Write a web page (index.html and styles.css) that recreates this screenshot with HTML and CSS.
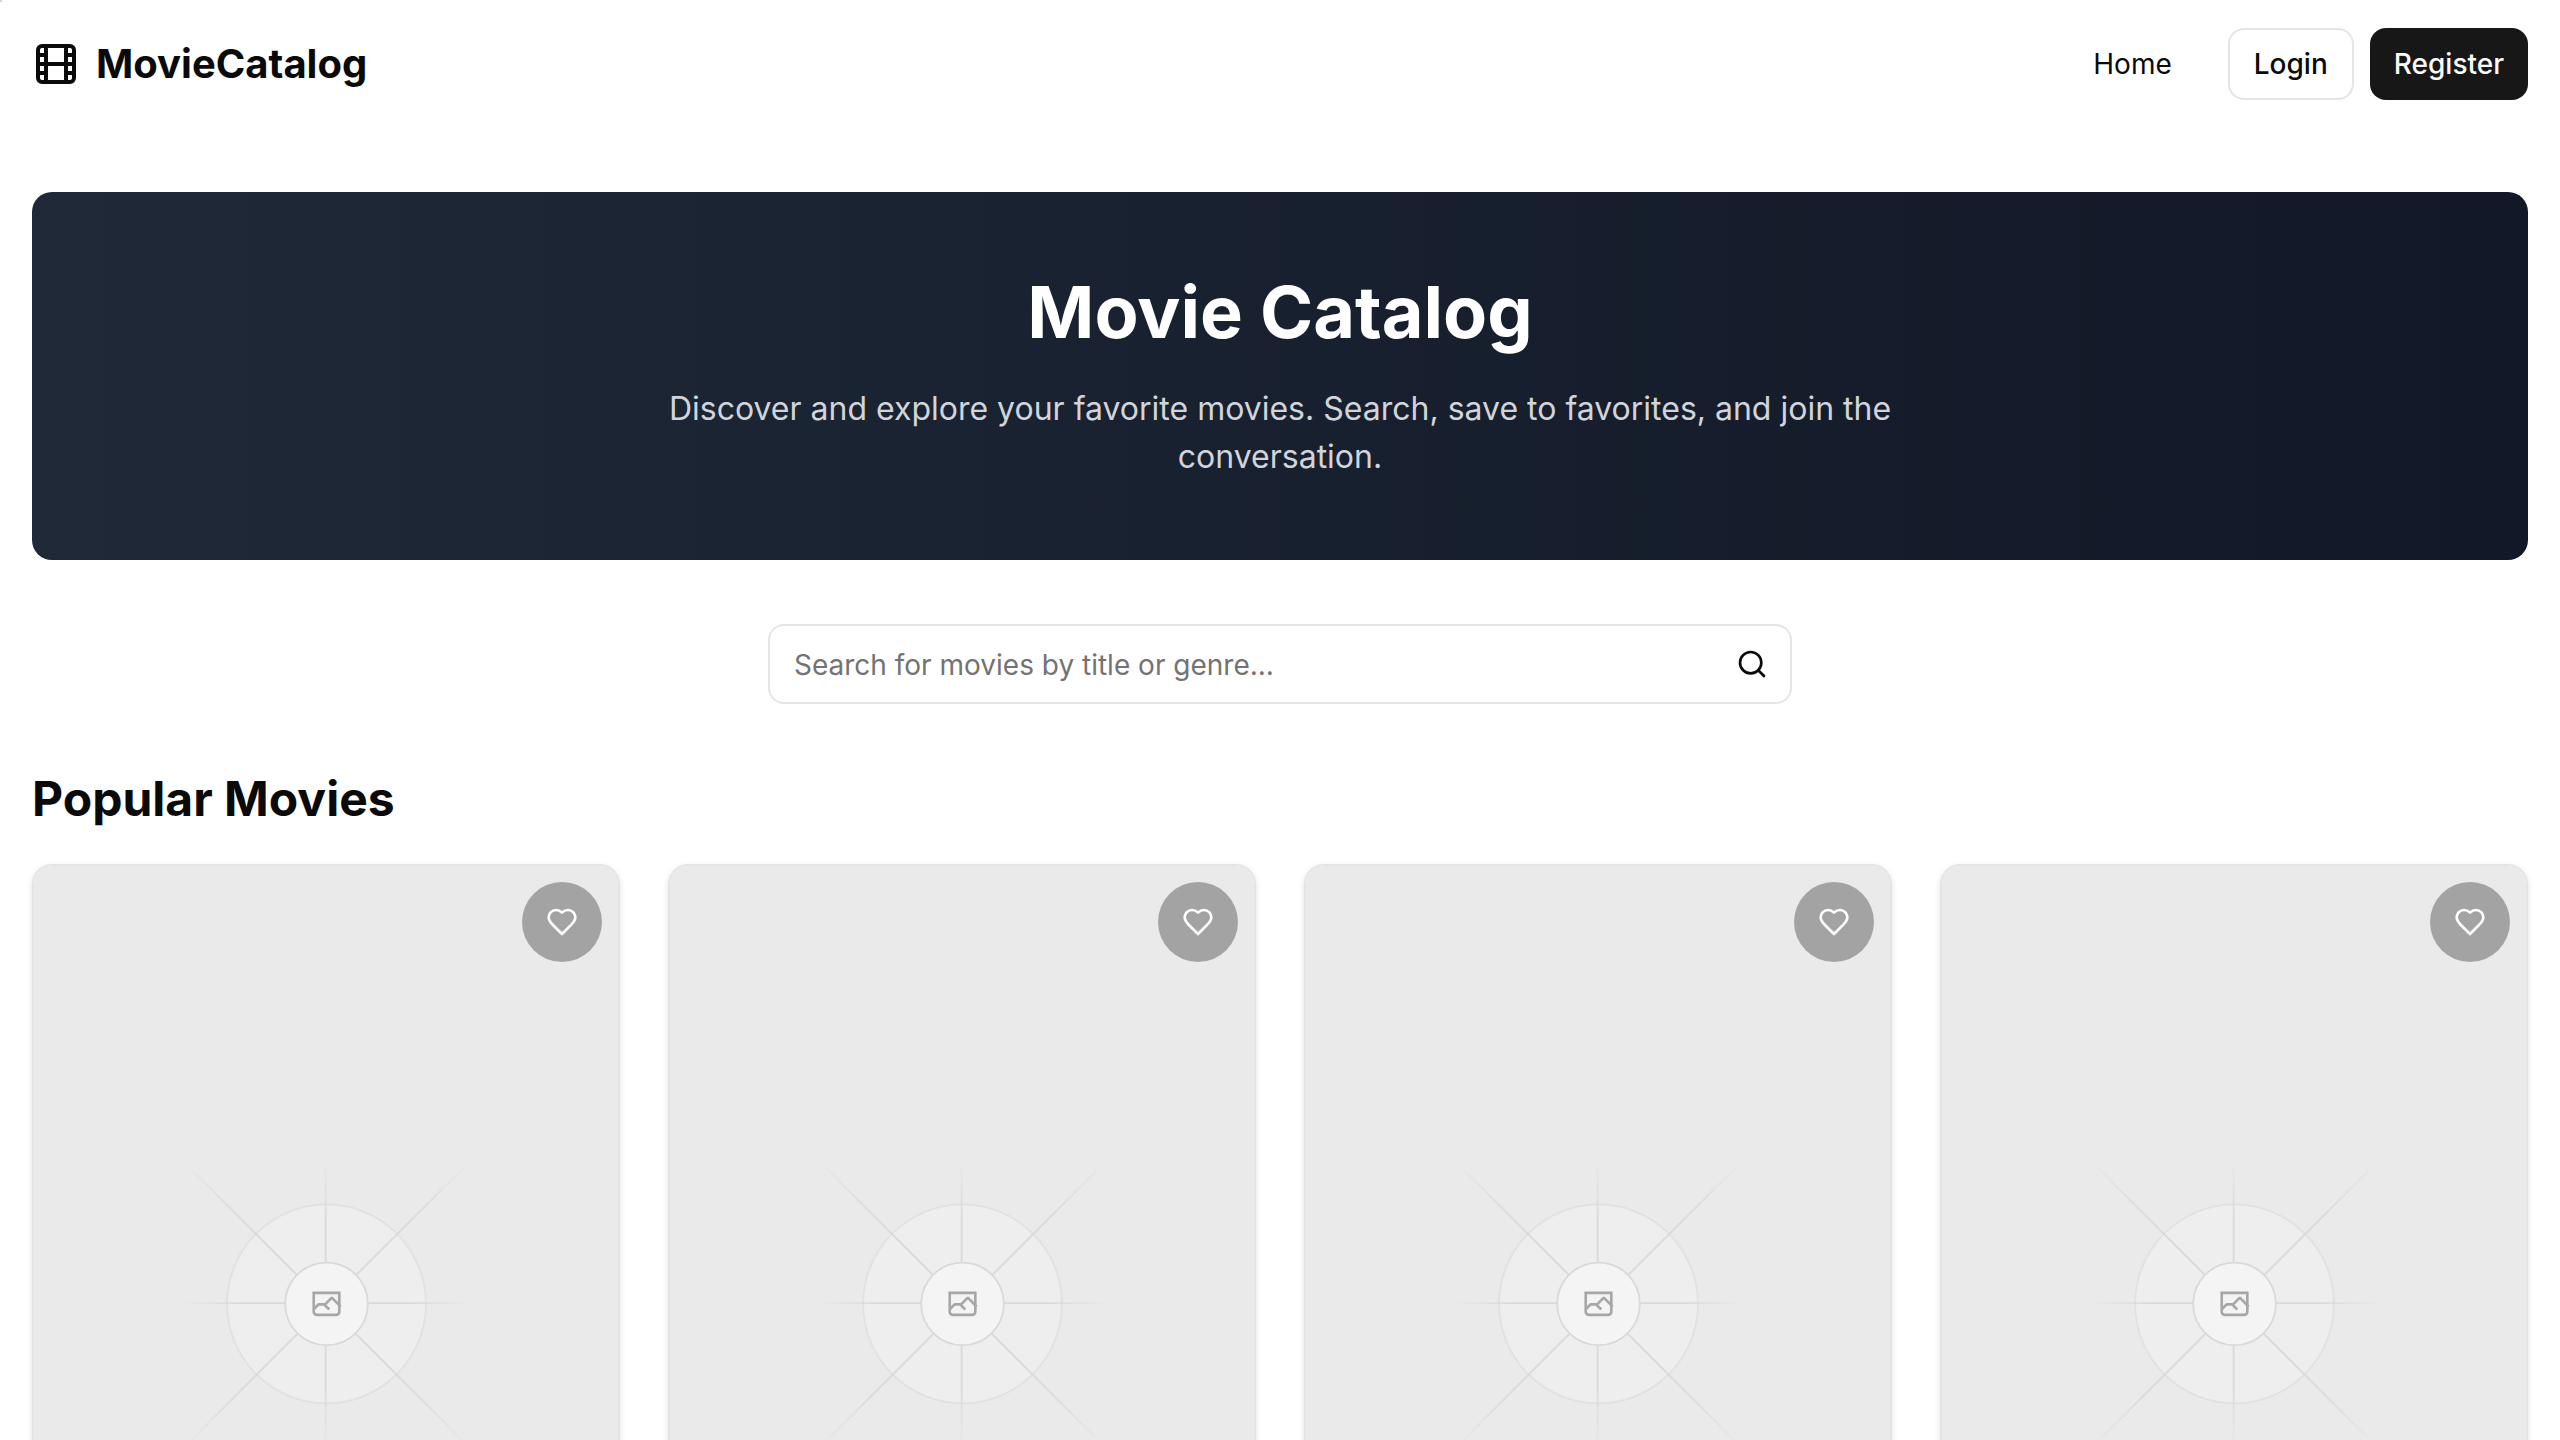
FILE: index.html
```html
<!DOCTYPE html>
<html lang="en">
<head>
<meta charset="utf-8">
<title>MovieCatalog</title>
<link rel="stylesheet" href="styles.css">
</head>
<body>
<svg class="sprite" aria-hidden="true">
  <defs>
    <linearGradient id="ray-d1" gradientUnits="userSpaceOnUse" x1="408" y1="408" x2="792" y2="792">
      <stop stop-color="#c9c9c9" stop-opacity="0"/><stop offset=".208" stop-color="#c9c9c9"/><stop offset=".792" stop-color="#c9c9c9"/><stop offset="1" stop-color="#c9c9c9" stop-opacity="0"/>
    </linearGradient>
    <linearGradient id="ray-d2" gradientUnits="userSpaceOnUse" x1="793.7" y1="408" x2="408" y2="793.7">
      <stop stop-color="#c9c9c9" stop-opacity="0"/><stop offset=".208" stop-color="#c9c9c9"/><stop offset=".792" stop-color="#c9c9c9"/><stop offset="1" stop-color="#c9c9c9" stop-opacity="0"/>
    </linearGradient>
    <linearGradient id="ray-h" gradientUnits="userSpaceOnUse" x1="404.8" y1="598.7" x2="796.6" y2="598.7">
      <stop stop-color="#c9c9c9" stop-opacity="0"/><stop offset=".208" stop-color="#c9c9c9"/><stop offset=".792" stop-color="#c9c9c9"/><stop offset="1" stop-color="#c9c9c9" stop-opacity="0"/>
    </linearGradient>
    <linearGradient id="ray-v" gradientUnits="userSpaceOnUse" x1="599.5" y1="404" x2="599.5" y2="795.7">
      <stop stop-color="#c9c9c9" stop-opacity="0"/><stop offset=".208" stop-color="#c9c9c9"/><stop offset=".792" stop-color="#c9c9c9"/><stop offset="1" stop-color="#c9c9c9" stop-opacity="0"/>
    </linearGradient>
  </defs>
  <symbol id="placeholder" viewBox="0 0 1200 1200" preserveAspectRatio="xMidYMid slice">
    <rect width="1200" height="1200" fill="#eaeaea"/>
    <g opacity=".5" fill="none" stroke-width="2.418">
      <g opacity=".5">
        <circle cx="600.709" cy="599.88" r="136.62" fill="#fafafa"/>
        <circle cx="600.709" cy="599.88" r="136.2" stroke="#c9c9c9"/>
      </g>
      <path stroke="url(#ray-d1)" d="M408 408 792 792"/>
      <path stroke="url(#ray-d2)" d="M793.7 408 408 793.7"/>
      <path stroke="url(#ray-h)" d="M404.846 598.671h391.726"/>
      <path stroke="url(#ray-v)" d="M599.5 795.742V404.017"/>
      <circle cx="600.709" cy="599.88" r="56.6" fill="#fff" stroke="#c9c9c9"/>
      <path fill="#666" fill-rule="evenodd" d="M616.426 586.58h-31.434v16.176l3.553-3.554.531-.531h9.068l.074-.074 8.463-8.463h2.565l7.18 7.181V586.58Zm-15.715 14.654 3.698 3.699 1.283 1.282-2.565 2.565-1.282-1.283-5.2-5.199h-6.066l-5.514 5.514-.073.073v2.876a2.418 2.418 0 0 0 2.418 2.418h26.598a2.418 2.418 0 0 0 2.418-2.418v-8.317l-8.463-8.463-7.181 7.181-.071.072Zm-19.347 5.442v4.085a6.045 6.045 0 0 0 6.046 6.045h26.598a6.044 6.044 0 0 0 6.045-6.045v-7.108l1.356-1.355-1.282-1.283-.074-.073v-17.989h-38.689v23.43l-.146.146.146.147Z"/>
    </g>
  </symbol>
  <symbol id="heart" viewBox="0 0 24 24">
    <path d="M19 14c1.49-1.46 3-3.21 3-5.5A5.5 5.5 0 0 0 16.5 3c-1.76 0-3 .5-4.5 2-1.5-1.5-2.74-2-4.5-2A5.5 5.5 0 0 0 2 8.5c0 2.3 1.5 4.05 3 5.5l7 7Z"/>
  </symbol>
</svg>
<span class="corner-dot"></span>

<header class="header">
  <a class="brand">
    <svg class="icon brand-icon" viewBox="0 0 24 24"><rect width="18" height="18" x="3" y="3" rx="2"/><path d="M7 3v18M3 7.5h4M3 12h18M3 16.5h4M17 3v18M17 7.5h4M17 16.5h4"/></svg>
    <span>MovieCatalog</span>
  </a>
  <nav class="nav">
    <a class="nav-link">Home</a>
    <div class="actions">
      <a class="button button-outline">Login</a>
      <a class="button button-primary">Register</a>
    </div>
  </nav>
</header>

<main class="main">
  <section class="hero">
    <h1 class="hero-title">Movie Catalog</h1>
    <p class="hero-text">Discover and explore your favorite movies. Search, save to favorites, and join the conversation.</p>
  </section>

  <form class="search">
    <input class="search-input" type="text" placeholder="Search for movies by title or genre...">
    <svg class="icon search-icon" viewBox="0 0 24 24"><circle cx="11" cy="11" r="8"/><path d="m21 21-4.3-4.3"/></svg>
  </form>

  <section>
    <h2 class="section-title">Popular Movies</h2>
    <div class="grid">
      <article class="card"><svg class="poster"><use href="#placeholder"/></svg><span class="favorite"><svg class="icon heart-icon"><use href="#heart"/></svg></span></article>
      <article class="card"><svg class="poster"><use href="#placeholder"/></svg><span class="favorite"><svg class="icon heart-icon"><use href="#heart"/></svg></span></article>
      <article class="card"><svg class="poster"><use href="#placeholder"/></svg><span class="favorite"><svg class="icon heart-icon"><use href="#heart"/></svg></span></article>
      <article class="card"><svg class="poster"><use href="#placeholder"/></svg><span class="favorite"><svg class="icon heart-icon"><use href="#heart"/></svg></span></article>
    </div>
  </section>
</main>
</body>
</html>
```
FILE: styles.css
```css
* { box-sizing: border-box; margin: 0; }
body {
  height: 1440px;
  overflow: hidden;
  background: #fff;
  color: #0a0a0a;
  font-family: Inter, "Liberation Sans", sans-serif;
  font-size: 28px;
  line-height: 40px;
}
.sprite { position: absolute; width: 0; height: 0; }
.corner-dot { position: absolute; top: 0; left: 0; width: 2px; height: 2px; background: #d4d4d4; }
.icon { fill: none; stroke: currentColor; stroke-width: 2; stroke-linecap: round; stroke-linejoin: round; }
.header { display: flex; align-items: center; justify-content: space-between; height: 128px; padding: 0 32px; }
.brand { display: flex; align-items: center; gap: 16px; font-size: 40px; line-height: 56px; font-weight: 700; }
.brand-icon { width: 48px; height: 48px; }
.nav { display: flex; align-items: center; gap: 56px; }
.nav-link { font-weight: 400; }
.actions { display: flex; gap: 16px; }
.button { display: flex; align-items: center; height: 72px; padding: 0 24px; border-radius: 16px; font-weight: 500; }
.button-outline { border: 2px solid #e5e5e5; }
.button-primary { background: #171717; color: #fafafa; }
.main { padding: 64px 32px; }
.hero { display: flex; flex-direction: column; align-items: center; gap: 33px; padding: 80px 0 79px; border-radius: 20px; background: linear-gradient(to right, #1f2937, #111827); text-align: center; }
.hero-title { color: #fff; font-size: 72px; line-height: 80px; font-weight: 700; }
.hero-text { width: 1344px; color: #d1d5db; font-size: 32px; line-height: 48px; }
.search { display: flex; align-items: center; width: 1024px; height: 80px; margin: 64px auto; padding: 0 22px 0 24px; border: 2px solid #e5e5e5; border-radius: 16px; }
.search-input { flex: 1; padding: 2px 0 0; border: 0; outline: 0; background: none; color: inherit; font: inherit; }
.search-input::placeholder { color: #737373; }
.search-icon { width: 32px; height: 32px; }
.section-title { margin-bottom: 34px; font-size: 48px; line-height: 62px; font-weight: 700; }
.grid { display: grid; grid-template-columns: repeat(4, 1fr); gap: 48px; }
.card { position: relative; overflow: hidden; border: 2px solid #e5e5e5; border-radius: 20px; box-shadow: 0 2px 6px rgb(0 0 0 / .1), 0 2px 4px -2px rgb(0 0 0 / .1); }
.poster { display: block; width: 100%; height: 876px; }
.favorite { position: absolute; top: 16px; right: 16px; display: flex; align-items: center; justify-content: center; width: 80px; height: 80px; border-radius: 50%; background: rgb(0 0 0 / .3); color: #fff; }
.heart-icon { width: 32px; height: 32px; }
```
